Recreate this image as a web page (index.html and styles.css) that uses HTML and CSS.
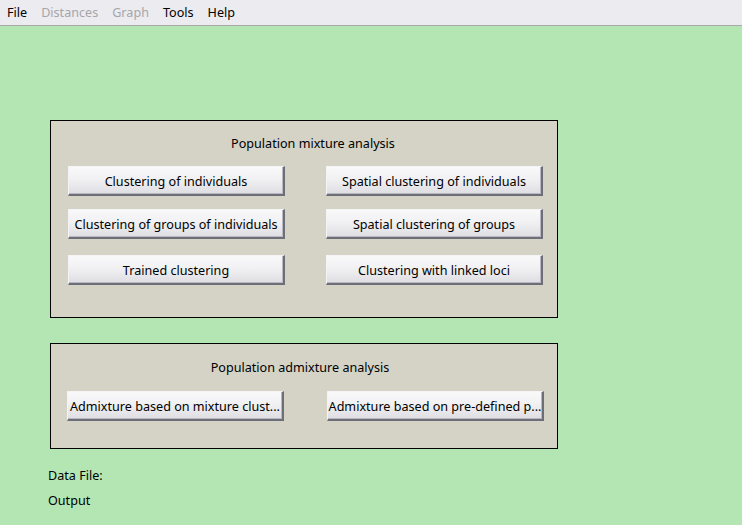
FILE: index.html
```html
<!DOCTYPE html>
<html>
<head>
<meta charset="utf-8">
<link rel="stylesheet" href="styles.css">
</head>
<body>
<div class="menubar">
  <span class="menu">File</span>
  <span class="menu disabled">Distances</span>
  <span class="menu disabled">Graph</span>
  <span class="menu">Tools</span>
  <span class="menu">Help</span>
</div>
<div class="main">
  <section class="panel panel-mix">
    <div class="title">Population mixture analysis</div>
    <div class="grid">
      <button class="btn">Clustering of individuals</button>
      <button class="btn">Spatial clustering of individuals</button>
      <button class="btn row2">Clustering of groups of individuals</button>
      <button class="btn row2">Spatial clustering of groups</button>
      <button class="btn row3">Trained clustering</button>
      <button class="btn row3">Clustering with linked loci</button>
    </div>
  </section>
  <section class="panel panel-admix">
    <div class="title">Population admixture analysis</div>
    <div class="grid">
      <button class="btn">Admixture based on mixture clust...</button>
      <button class="btn">Admixture based on pre-defined p...</button>
    </div>
  </section>
  <div class="info">Data File:</div>
  <div class="info">Output</div>
</div>
</body>
</html>
```
FILE: styles.css
```css
html, body {
  margin: 0;
  padding: 0;
  background: #b4e6b4;
  font-family: "Noto Sans", "Open Sans", sans-serif;
  font-size: 12.6px;
  color: #000;
  height: 100%;
}
.menubar {
  height: 25px;
  background: #ecebf0;
  border-bottom: 1px solid #a9a9ad;
  display: flex;
  align-items: center;
  padding-left: 7px;
}
.menu {
  margin-right: 14px;
  line-height: 25px;
}
.menu.disabled {
  color: #a6a6a8;
}
.main {
  padding: 94px 0 0 50px;
}
.panel {
  box-sizing: border-box;
  width: 508px;
  background: #d4d3c6;
  border: 1px solid #000;
  display: flex;
  flex-direction: column;
}
.panel-mix {
  height: 198px;
}
.panel-admix {
  margin-top: 25px;
  height: 106px;
}
.title {
  text-align: center;
  margin-top: 14px;
  margin-bottom: -1px;
  line-height: 18px;
}
.panel-mix .title {
  padding-left: 18px;
}
.panel-admix .title {
  margin-top: 15px;
  padding-right: 8px;
}
.grid {
  display: grid;
  grid-template-columns: 217px 217px;
  column-gap: 41px;
  padding-left: 17px;
  margin-top: 14px;
}
.panel-admix .grid {
  margin-top: 15px;
  padding-left: 16px;
  column-gap: 43px;
}
.btn {
  box-sizing: border-box;
  height: 30px;
  width: 217px;
  font-family: inherit;
  font-size: 12.6px;
  color: #000;
  padding: 2px 0 0 0;
  white-space: nowrap;
  border: 1px solid #f4f4f6;
  border-right: 2px solid #6e6e78;
  border-bottom: 2px solid #6e6e78;
  background: linear-gradient(to bottom, #f9f9fa 0%, #f1f1f3 45%, #dedde2 100%);
  box-shadow: inset -1px -1px 0 #b8b8c0;
}
.row2 {
  margin-top: 13px;
}
.row3 {
  margin-top: 16px;
}
.info {
  margin-left: -2px;
  line-height: 18px;
}
.panel-admix + .info {
  margin-top: 18px;
}
.info + .info {
  margin-top: 7px;
}
```
